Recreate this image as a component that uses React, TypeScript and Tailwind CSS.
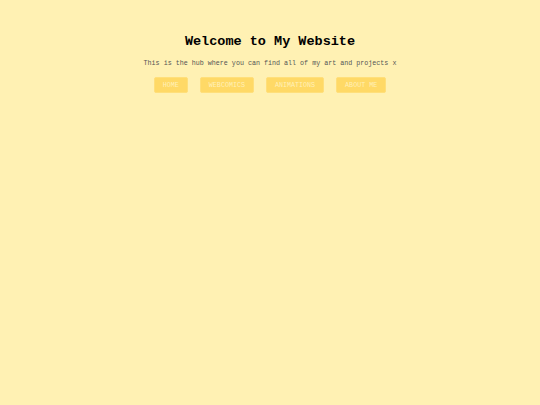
export default function App() {
  const links = ['HOME', 'WEBCOMICS', 'ANIMATIONS', 'ABOUT ME'];
  return (
    <div className="min-h-[405px] w-full bg-[#fff1b3] font-['Liberation_Mono','Courier_New',monospace] flex flex-col items-center pt-[33px]">
      <h1 className="text-[13.5px] leading-[18px] font-bold text-black">Welcome to My Website</h1>
      <p className="mt-[8px] text-[6.7px] leading-[9px] text-[#555]">
        This is the hub where you can find all of my art and projects x
      </p>
      <nav className="mt-[9px] flex gap-[12px]">
        {links.map((l) => (
          <a
            key={l}
            className="h-[16px] px-[8px] flex items-center rounded-[2px] bg-[#ffd966] border border-[#ffdf7a] text-[6.7px] text-[#fff0b8]"
          >
            {l}
          </a>
        ))}
      </nav>
    </div>
  );
}
